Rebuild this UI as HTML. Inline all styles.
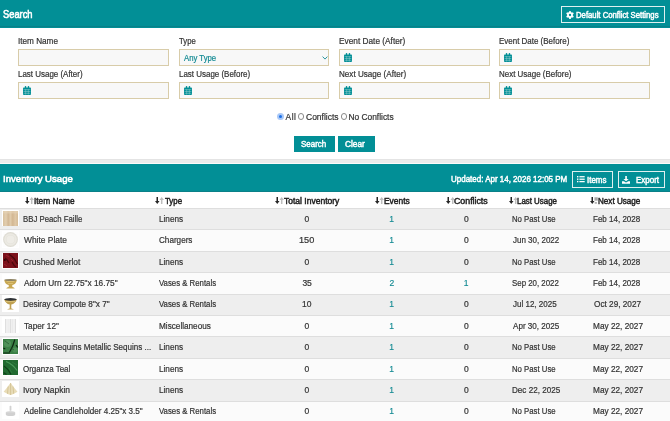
<!DOCTYPE html><html><head><meta charset="utf-8"><style>
*{box-sizing:border-box}
html,body{margin:0;padding:0;width:670px;height:421px;overflow:hidden;background:#fff;font-family:"Liberation Sans",sans-serif}
#w{position:absolute;left:0;top:0;width:670px;height:421px;overflow:hidden;will-change:transform;background:#fff}
.a{position:absolute}
.t{position:absolute;white-space:nowrap;transform-origin:0 0}
.r{-webkit-text-stroke:0.2px currentColor}
.sb{-webkit-text-stroke:0.45px currentColor}
.lk{-webkit-text-stroke:0.15px currentColor}
.sb2{-webkit-text-stroke:0.6px currentColor}
.inp{position:absolute;height:17px;border:1px solid #d8cca9;background:#f8f8f8}
.cal{position:absolute;left:3.8px;top:2.8px}
.ob{position:absolute;border:1px solid #dff0f0}
.tb{position:absolute;background:#028f96}
.th{position:absolute;left:2.4px;width:16.4px;height:16.4px;overflow:hidden;background:#fff;padding:0.7px}
.th svg{display:block;width:15px;height:15px}
</style></head><body><div id="w">
<div class="a" style="left:0;top:0;width:670px;height:27.5px;background:#028f96"></div>
<div class="a" style="left:0;top:26.4px;width:670px;height:1.1px;background:#0a8088"></div>
<div class="ob" style="left:561px;top:6.2px;width:104px;height:16.6px"></div>
<svg class="a" style="left:565.5px;top:11px" width="8" height="8" viewBox="-4 -4 8 8"><g fill="#fff"><rect x="-0.95" y="-3.9" width="1.9" height="2.2" rx="0.4" transform="rotate(0)"/><rect x="-0.95" y="-3.9" width="1.9" height="2.2" rx="0.4" transform="rotate(60)"/><rect x="-0.95" y="-3.9" width="1.9" height="2.2" rx="0.4" transform="rotate(120)"/><rect x="-0.95" y="-3.9" width="1.9" height="2.2" rx="0.4" transform="rotate(180)"/><rect x="-0.95" y="-3.9" width="1.9" height="2.2" rx="0.4" transform="rotate(240)"/><rect x="-0.95" y="-3.9" width="1.9" height="2.2" rx="0.4" transform="rotate(300)"/><circle r="2.9"/></g><circle r="1.15" fill="#028f96"/></svg>
<div class="inp" style="left:18.0px;top:49px;width:150.6px"></div>
<div class="inp" style="left:18.0px;top:82px;width:150.6px"><svg class="cal" width="8" height="9" viewBox="0 0 8 9"><rect x="0" y="1.4" width="8" height="7.6" rx="0.9" fill="#028f96"/><rect x="1.9" y="0" width="1.3" height="2.4" rx="0.5" fill="#028f96"/><rect x="4.8" y="0" width="1.3" height="2.4" rx="0.5" fill="#028f96"/><path d="M0.6 3.6h6.8M0.6 5.5h6.8M0.6 7.3h6.8M2.7 3.3v5.3M5.3 3.3v5.3" stroke="#cfe6e7" stroke-width="0.45" opacity="0.8"/></svg></div>
<div class="inp" style="left:178.8px;top:49px;width:150.6px"><svg class="a" style="left:142px;top:5.8px" width="6" height="4" viewBox="0 0 6 4"><path d="M0.6 0.6L3 3.1L5.4 0.6" fill="none" stroke="#138a93" stroke-width="0.9"/></svg></div>
<div class="inp" style="left:178.8px;top:82px;width:150.6px"><svg class="cal" width="8" height="9" viewBox="0 0 8 9"><rect x="0" y="1.4" width="8" height="7.6" rx="0.9" fill="#028f96"/><rect x="1.9" y="0" width="1.3" height="2.4" rx="0.5" fill="#028f96"/><rect x="4.8" y="0" width="1.3" height="2.4" rx="0.5" fill="#028f96"/><path d="M0.6 3.6h6.8M0.6 5.5h6.8M0.6 7.3h6.8M2.7 3.3v5.3M5.3 3.3v5.3" stroke="#cfe6e7" stroke-width="0.45" opacity="0.8"/></svg></div>
<div class="inp" style="left:339.2px;top:49px;width:150.6px"><svg class="cal" width="8" height="9" viewBox="0 0 8 9"><rect x="0" y="1.4" width="8" height="7.6" rx="0.9" fill="#028f96"/><rect x="1.9" y="0" width="1.3" height="2.4" rx="0.5" fill="#028f96"/><rect x="4.8" y="0" width="1.3" height="2.4" rx="0.5" fill="#028f96"/><path d="M0.6 3.6h6.8M0.6 5.5h6.8M0.6 7.3h6.8M2.7 3.3v5.3M5.3 3.3v5.3" stroke="#cfe6e7" stroke-width="0.45" opacity="0.8"/></svg></div>
<div class="inp" style="left:339.2px;top:82px;width:150.6px"><svg class="cal" width="8" height="9" viewBox="0 0 8 9"><rect x="0" y="1.4" width="8" height="7.6" rx="0.9" fill="#028f96"/><rect x="1.9" y="0" width="1.3" height="2.4" rx="0.5" fill="#028f96"/><rect x="4.8" y="0" width="1.3" height="2.4" rx="0.5" fill="#028f96"/><path d="M0.6 3.6h6.8M0.6 5.5h6.8M0.6 7.3h6.8M2.7 3.3v5.3M5.3 3.3v5.3" stroke="#cfe6e7" stroke-width="0.45" opacity="0.8"/></svg></div>
<div class="inp" style="left:499.3px;top:49px;width:150.6px"><svg class="cal" width="8" height="9" viewBox="0 0 8 9"><rect x="0" y="1.4" width="8" height="7.6" rx="0.9" fill="#028f96"/><rect x="1.9" y="0" width="1.3" height="2.4" rx="0.5" fill="#028f96"/><rect x="4.8" y="0" width="1.3" height="2.4" rx="0.5" fill="#028f96"/><path d="M0.6 3.6h6.8M0.6 5.5h6.8M0.6 7.3h6.8M2.7 3.3v5.3M5.3 3.3v5.3" stroke="#cfe6e7" stroke-width="0.45" opacity="0.8"/></svg></div>
<div class="inp" style="left:499.3px;top:82px;width:150.6px"><svg class="cal" width="8" height="9" viewBox="0 0 8 9"><rect x="0" y="1.4" width="8" height="7.6" rx="0.9" fill="#028f96"/><rect x="1.9" y="0" width="1.3" height="2.4" rx="0.5" fill="#028f96"/><rect x="4.8" y="0" width="1.3" height="2.4" rx="0.5" fill="#028f96"/><path d="M0.6 3.6h6.8M0.6 5.5h6.8M0.6 7.3h6.8M2.7 3.3v5.3M5.3 3.3v5.3" stroke="#cfe6e7" stroke-width="0.45" opacity="0.8"/></svg></div>
<div class="a" style="left:277px;top:112.9px;width:7px;height:7px;border-radius:50%;background:#a9c8f7"></div>
<div class="a" style="left:278.8px;top:114.7px;width:3.4px;height:3.4px;border-radius:50%;background:#1b6fe6"></div>
<div class="a" style="left:297.79999999999995px;top:113.4px;width:6.2px;height:6.2px;border-radius:50%;border:0.7px solid #8a8a8a;background:#fff"></div>
<div class="a" style="left:340.79999999999995px;top:113.4px;width:6.2px;height:6.2px;border-radius:50%;border:0.7px solid #8a8a8a;background:#fff"></div>
<div class="tb" style="left:293.8px;top:135.8px;width:41.2px;height:16.1px"></div>
<div class="tb" style="left:338.1px;top:135.8px;width:36.5px;height:16.1px"></div>
<div class="a" style="left:0;top:158.8px;width:670px;height:5.6px;background:#ebebeb"></div>
<div class="a" style="left:0;top:158.8px;width:670px;height:1px;background:#e4e4e4"></div>
<div class="a" style="left:0;top:163.4px;width:670px;height:0.9px;background:#fafafa"></div>
<div class="a" style="left:0;top:164.3px;width:670px;height:28.2px;background:#028f96"></div>
<div class="a" style="left:0;top:191.4px;width:670px;height:1.1px;background:#0a8088"></div>
<div class="ob" style="left:572px;top:171.2px;width:40.5px;height:16.4px"></div>
<div class="ob" style="left:618px;top:171.2px;width:47px;height:16.4px"></div>
<svg class="a" style="left:576.6px;top:176.3px" width="8" height="7" viewBox="0 0 8 7"><g fill="#fff"><rect x="0" y="0" width="1.4" height="1.4"/><rect x="0" y="2.5" width="1.4" height="1.4"/><rect x="0" y="4.9" width="1.4" height="1.4"/><rect x="2.4" y="0.1" width="5.3" height="1.25"/><rect x="2.4" y="2.6" width="5.3" height="1.25"/><rect x="2.4" y="5.0" width="5.3" height="1.25"/></g></svg>
<svg class="a" style="left:621.9px;top:175.6px" width="8" height="8" viewBox="0 0 8 8"><g fill="#fff"><rect x="3.25" y="0" width="1.6" height="3.4"/><path d="M1.4 3h5.3L4.05 5.3z"/><path d="M0 5.2h2.2l0.9 1h1.9l0.9-1H8v2.6H0z"/></g></svg>
<div class="a" style="left:0;top:192.5px;width:670px;height:15.5px;background:#fff"></div>
<svg class="a" style="left:24.9px;top:197.1px" width="9" height="7" viewBox="0 0 9 7"><rect x="1.5" y="0" width="1.5" height="5" fill="#262626"/><path d="M0 4.0h4.5L2.25 7z" fill="#262626"/><rect x="5.95" y="2" width="1.5" height="5" fill="#bdbdbd"/><path d="M4.45 3.0h4.5L6.7 0z" fill="#bdbdbd"/></svg>
<svg class="a" style="left:155.2px;top:197.1px" width="9" height="7" viewBox="0 0 9 7"><rect x="1.5" y="0" width="1.5" height="5" fill="#262626"/><path d="M0 4.0h4.5L2.25 7z" fill="#262626"/><rect x="5.95" y="2" width="1.5" height="5" fill="#bdbdbd"/><path d="M4.45 3.0h4.5L6.7 0z" fill="#bdbdbd"/></svg>
<svg class="a" style="left:274.7px;top:197.1px" width="9" height="7" viewBox="0 0 9 7"><rect x="1.5" y="0" width="1.5" height="5" fill="#262626"/><path d="M0 4.0h4.5L2.25 7z" fill="#262626"/><rect x="5.95" y="2" width="1.5" height="5" fill="#bdbdbd"/><path d="M4.45 3.0h4.5L6.7 0z" fill="#bdbdbd"/></svg>
<svg class="a" style="left:375.3px;top:197.1px" width="9" height="7" viewBox="0 0 9 7"><rect x="1.5" y="0" width="1.5" height="5" fill="#262626"/><path d="M0 4.0h4.5L2.25 7z" fill="#262626"/><rect x="5.95" y="2" width="1.5" height="5" fill="#bdbdbd"/><path d="M4.45 3.0h4.5L6.7 0z" fill="#bdbdbd"/></svg>
<svg class="a" style="left:445.8px;top:197.1px" width="9" height="7" viewBox="0 0 9 7"><rect x="1.5" y="0" width="1.5" height="5" fill="#262626"/><path d="M0 4.0h4.5L2.25 7z" fill="#262626"/><rect x="5.95" y="2" width="1.5" height="5" fill="#bdbdbd"/><path d="M4.45 3.0h4.5L6.7 0z" fill="#bdbdbd"/></svg>
<svg class="a" style="left:508.6px;top:197.1px" width="9" height="7" viewBox="0 0 9 7"><rect x="1.5" y="0" width="1.5" height="5" fill="#262626"/><path d="M0 4.0h4.5L2.25 7z" fill="#262626"/><rect x="5.95" y="2" width="1.5" height="5" fill="#bdbdbd"/><path d="M4.45 3.0h4.5L6.7 0z" fill="#bdbdbd"/></svg>
<svg class="a" style="left:589.9px;top:197.1px" width="9" height="7" viewBox="0 0 9 7"><rect x="1.5" y="0" width="1.5" height="5" fill="#262626"/><path d="M0 4.0h4.5L2.25 7z" fill="#262626"/><rect x="4.4" y="0.3" width="3.4" height="3.4" fill="#aaaaaa"/><rect x="4.7" y="5" width="2.2" height="1.8" fill="#b3b3b3"/></svg>
<div class="a" style="left:0;top:208.00px;width:670px;height:21.89px;background:#eeeeee"></div>
<div class="a" style="left:0;top:208.00px;width:670px;height:1px;background:#dedede"></div>
<div class="th" style="top:209.90px"><svg width="15" height="15" viewBox="0 0 15 15"><defs><linearGradient id="pg" x1="0" x2="1" y1="0" y2="0"><stop offset="0" stop-color="#d8c09c"/><stop offset=".2" stop-color="#e2ceb0"/><stop offset=".35" stop-color="#d2b794"/><stop offset=".5" stop-color="#e0cbab"/><stop offset=".65" stop-color="#d3b792"/><stop offset=".82" stop-color="#dfc8a7"/><stop offset="1" stop-color="#d5bb96"/></linearGradient></defs><rect width="15" height="15" fill="url(#pg)"/><rect width="15" height="2.5" fill="#e6d4b8" opacity=".6"/></svg></div>
<div class="a" style="left:0;top:229.39px;width:670px;height:21.89px;background:#fbfbfb"></div>
<div class="a" style="left:0;top:229.39px;width:670px;height:1px;background:#dedede"></div>
<div class="th" style="top:231.29px"><svg width="15" height="15" viewBox="0 0 15 15"><rect width="15" height="15" fill="#fdfdfd"/><circle cx="7.5" cy="7.5" r="7.4" fill="#dedcd3"/><circle cx="7.5" cy="7.5" r="6.3" fill="#ebe9e2"/><circle cx="7.5" cy="7.5" r="4.6" fill="#e4e2da"/><circle cx="7.5" cy="7.5" r="4.0" fill="#eeece6"/></svg></div>
<div class="a" style="left:0;top:250.78px;width:670px;height:21.89px;background:#eeeeee"></div>
<div class="a" style="left:0;top:250.78px;width:670px;height:1px;background:#dedede"></div>
<div class="th" style="top:252.68px"><svg width="15" height="15" viewBox="0 0 15 15"><rect width="15" height="15" fill="#7c121b"/><path d="M6 1C8 3 10 4 11.5 6S13 10 15 11M2 5C4 6 5 8 6 10M9 9c1 2 2 4 4 5" stroke="#420609" stroke-width="1.3" fill="none" opacity=".85"/><path d="M3 2l3 2M8 6l2 2M1 11l3 2" stroke="#a52a35" stroke-width=".7"/><circle cx="1.8" cy="7" r="1" fill="#2a0306"/></svg></div>
<div class="a" style="left:0;top:272.17px;width:670px;height:21.89px;background:#fbfbfb"></div>
<div class="a" style="left:0;top:272.17px;width:670px;height:1px;background:#dedede"></div>
<div class="th" style="top:274.07px"><svg width="15" height="15" viewBox="0 0 15 15"><rect width="15" height="15" fill="#fff"/><path d="M1.3 5h12.4c-.3 2.8-2 4.6-4.4 5.1v1.8c1.5.3 2.5.9 2.5 1.7H3.2c0-.8 1-1.4 2.5-1.7v-1.8C3.3 9.6 1.6 7.8 1.3 5z" fill="#c8a751"/><ellipse cx="7.5" cy="5" rx="6.2" ry="0.9" fill="#8f8464"/><path d="M3.5 6.5h8M5 8.5h5" stroke="#e6d08c" stroke-width=".6"/></svg></div>
<div class="a" style="left:0;top:293.56px;width:670px;height:21.89px;background:#eeeeee"></div>
<div class="a" style="left:0;top:293.56px;width:670px;height:1px;background:#dedede"></div>
<div class="th" style="top:295.46px"><svg width="15" height="15" viewBox="0 0 15 15"><rect width="15" height="15" fill="#fff"/><path d="M1.2 3.2h12.6c-.6 3-3 4.8-5.5 5.2v4c1.3.2 2.4.6 2.4 1.2H4.3c0-.6 1.1-1 2.4-1.2v-4C4.2 8 1.8 6.2 1.2 3.2z" fill="#c0a050"/><ellipse cx="7.5" cy="3.4" rx="6.2" ry="1.3" fill="#2e3236"/><path d="M2.8 5.5h9.4" stroke="#e8d590" stroke-width=".6"/></svg></div>
<div class="a" style="left:0;top:314.95px;width:670px;height:21.89px;background:#fbfbfb"></div>
<div class="a" style="left:0;top:314.95px;width:670px;height:1px;background:#dedede"></div>
<div class="th" style="top:316.85px"><svg width="15" height="15" viewBox="0 0 15 15"><rect width="15" height="15" fill="#fff"/><g fill="#dadada"><rect x="2" y="1" width="0.9" height="14"/><rect x="4.6" y="1" width="0.9" height="14"/><rect x="7" y="1" width="0.9" height="14"/><rect x="9.4" y="1" width="0.9" height="14"/><rect x="12" y="1" width="0.9" height="14"/></g><g fill="#f0f0f0"><rect x="2.9" y="1" width="1.7" height="14"/><rect x="5.5" y="1" width="1.5" height="14"/><rect x="7.9" y="1" width="1.5" height="14"/><rect x="10.3" y="1" width="1.7" height="14"/></g></svg></div>
<div class="a" style="left:0;top:336.34px;width:670px;height:21.89px;background:#eeeeee"></div>
<div class="a" style="left:0;top:336.34px;width:670px;height:1px;background:#dedede"></div>
<div class="th" style="top:338.24px"><svg width="15" height="15" viewBox="0 0 15 15"><rect width="15" height="15" fill="#3b8046"/><circle cx="4.5" cy="4.5" r="3.5" fill="#5e9d66" opacity=".6"/><circle cx="12" cy="11" r="2.5" fill="#5e9d66" opacity=".5"/><path d="M11.8 0.5C11 4 10 7.5 6.5 13.2M0.3 14h6.5M13 6l1.8 2.5M0.3 9l2 1" stroke="#0d2611" stroke-width="1.2" fill="none"/><path d="M2 2l4 3M8 9l3 2" stroke="#1d4a24" stroke-width=".6"/></svg></div>
<div class="a" style="left:0;top:357.73px;width:670px;height:21.89px;background:#fbfbfb"></div>
<div class="a" style="left:0;top:357.73px;width:670px;height:1px;background:#dedede"></div>
<div class="th" style="top:359.63px"><svg width="15" height="15" viewBox="0 0 15 15"><rect width="15" height="15" fill="#216a30"/><path d="M3 1.5C7 3 11 6 14 10.5" stroke="#4a9a5a" stroke-width="1.3" fill="none"/><path d="M1 6C4 8 6 10 8 14.5M0.5 12.5l3 2" stroke="#0f4019" stroke-width="1.2" fill="none"/><path d="M9 2l5 3M6 8l3 5" stroke="#2f7d3f" stroke-width=".8"/></svg></div>
<div class="a" style="left:0;top:379.12px;width:670px;height:21.89px;background:#eeeeee"></div>
<div class="a" style="left:0;top:379.12px;width:670px;height:1px;background:#dedede"></div>
<div class="th" style="top:381.02px"><svg width="15" height="15" viewBox="0 0 15 15"><rect width="15" height="15" fill="#fff"/><path d="M7.6 0.8C9.5 3.5 12.5 7.5 14.5 9.8 12 11.3 9.6 12.6 7.6 13 5.6 12.6 3 11.3 0.6 9.8 2.6 7.5 5.6 3.5 7.6 0.8z" fill="#e8dcb8"/><path d="M7.6 1v12M5.2 4.5L4.5 11.8M10 4.5L10.7 11.8" stroke="#cdbb88" stroke-width=".7"/></svg></div>
<div class="a" style="left:0;top:400.51px;width:670px;height:21.89px;background:#fbfbfb"></div>
<div class="a" style="left:0;top:400.51px;width:670px;height:1px;background:#dedede"></div>
<div class="th" style="top:402.41px"><svg width="15" height="15" viewBox="0 0 15 15"><rect width="15" height="15" fill="#fff"/><rect x="6.6" y="2.8" width="1.8" height="5" rx=".6" fill="#d2d2d2"/><ellipse cx="7.5" cy="9.6" rx="4.7" ry="1.6" fill="#dcdcdc"/><path d="M2.8 9.6v1.8c0 .9 2.1 1.6 4.7 1.6s4.7-.7 4.7-1.6V9.6" fill="#d0d0d0"/></svg></div>
<div class="t sb2" style="left:2.56px;top:9px;font-size:10.5px;line-height:10.5px;font-weight:400;letter-spacing:0px;color:#fff;transform:scaleX(0.8875)">Search</div>
<div class="t sb" style="left:576.41px;top:11px;font-size:8.4px;line-height:8.4px;font-weight:400;letter-spacing:0px;color:#fff;transform:scaleX(0.9235)">Default Conflict Settings</div>
<div class="t r" style="left:18.17px;top:37px;font-size:8.4px;line-height:8.4px;font-weight:400;letter-spacing:0px;color:#333333;transform:scaleX(0.9761)">Item Name</div>
<div class="t r" style="left:179.37px;top:37px;font-size:8.4px;line-height:8.4px;font-weight:400;letter-spacing:0px;color:#333333;transform:scaleX(0.9200)">Type</div>
<div class="t r" style="left:339.06px;top:37px;font-size:8.4px;line-height:8.4px;font-weight:400;letter-spacing:0px;color:#333333;transform:scaleX(0.9901)">Event Date (After)</div>
<div class="t r" style="left:499.49px;top:37px;font-size:8.4px;line-height:8.4px;font-weight:400;letter-spacing:0px;color:#333333;transform:scaleX(0.9500)">Event Date (Before)</div>
<div class="t r" style="left:18.19px;top:70px;font-size:8.4px;line-height:8.4px;font-weight:400;letter-spacing:0px;color:#333333;transform:scaleX(0.9500)">Last Usage (After)</div>
<div class="t r" style="left:178.89px;top:70px;font-size:8.4px;line-height:8.4px;font-weight:400;letter-spacing:0px;color:#333333;transform:scaleX(0.9500)">Last Usage (Before)</div>
<div class="t r" style="left:339.07px;top:70px;font-size:8.4px;line-height:8.4px;font-weight:400;letter-spacing:0px;color:#333333;transform:scaleX(0.9676)">Next Usage (After)</div>
<div class="t r" style="left:499.49px;top:70px;font-size:8.4px;line-height:8.4px;font-weight:400;letter-spacing:0px;color:#333333;transform:scaleX(0.9500)">Next Usage (Before)</div>
<div class="t r" style="left:184.10px;top:54px;font-size:8.4px;line-height:8.4px;font-weight:400;letter-spacing:0px;color:#138a93;transform:scaleX(0.9246)">Any Type</div>
<div class="t r" style="left:285.60px;top:113px;font-size:8.4px;line-height:8.4px;font-weight:400;letter-spacing:0.45px;color:#333333;transform:scaleX(1.0000)">All</div>
<div class="t r" style="left:305.69px;top:113px;font-size:8.4px;line-height:8.4px;font-weight:400;letter-spacing:0px;color:#333333;transform:scaleX(1.0144)">Conflicts</div>
<div class="t r" style="left:348.45px;top:113px;font-size:8.4px;line-height:8.4px;font-weight:400;letter-spacing:0px;color:#333333;transform:scaleX(1.0000)">No Conflicts</div>
<div class="t sb" style="left:301.33px;top:140px;font-size:8.4px;line-height:8.4px;font-weight:400;letter-spacing:0px;color:#fff;transform:scaleX(0.9490)">Search</div>
<div class="t sb" style="left:345.21px;top:140px;font-size:8.4px;line-height:8.4px;font-weight:400;letter-spacing:0px;color:#fff;transform:scaleX(0.9897)">Clear</div>
<div class="t sb2" style="left:2.62px;top:174px;font-size:9.8px;line-height:9.8px;font-weight:400;letter-spacing:0px;color:#fff;transform:scaleX(0.9792)">Inventory Usage</div>
<div class="t sb" style="left:451.49px;top:175px;font-size:8.4px;line-height:8.4px;font-weight:400;letter-spacing:0px;color:#fff;transform:scaleX(0.9527)">Updated: Apr 14, 2026 12:05 PM</div>
<div class="t sb" style="left:587.29px;top:176px;font-size:8.4px;line-height:8.4px;font-weight:400;letter-spacing:0px;color:#fff;transform:scaleX(0.9487)">Items</div>
<div class="t sb" style="left:635.89px;top:176px;font-size:8.4px;line-height:8.4px;font-weight:400;letter-spacing:0px;color:#fff;transform:scaleX(0.9532)">Export</div>
<div class="t sb" style="left:33.86px;top:197px;font-size:8.4px;line-height:8.4px;font-weight:400;letter-spacing:0px;color:#222;transform:scaleX(0.9912)">Item Name</div>
<div class="t sb" style="left:165.17px;top:197px;font-size:8.4px;line-height:8.4px;font-weight:400;letter-spacing:0px;color:#222;transform:scaleX(0.9371)">Type</div>
<div class="t sb" style="left:284.35px;top:197px;font-size:8.4px;line-height:8.4px;font-weight:400;letter-spacing:0px;color:#222;transform:scaleX(1.0167)">Total Inventory</div>
<div class="t sb" style="left:383.85px;top:197px;font-size:8.4px;line-height:8.4px;font-weight:400;letter-spacing:0px;color:#222;transform:scaleX(1.0041)">Events</div>
<div class="t sb" style="left:454.48px;top:197px;font-size:8.4px;line-height:8.4px;font-weight:400;letter-spacing:0px;color:#222;transform:scaleX(1.0496)">Conflicts</div>
<div class="t sb" style="left:516.89px;top:197px;font-size:8.4px;line-height:8.4px;font-weight:400;letter-spacing:0px;color:#222;transform:scaleX(0.9430)">Last Usage</div>
<div class="t sb" style="left:598.38px;top:197px;font-size:8.4px;line-height:8.4px;font-weight:400;letter-spacing:0px;color:#222;transform:scaleX(0.9661)">Next Usage</div>
<div class="t r" style="left:23.21px;top:215px;font-size:8.5px;line-height:8.5px;font-weight:400;letter-spacing:0px;color:#333333;transform:scaleX(0.9165)">BBJ Peach Faille</div>
<div class="t r" style="left:158.98px;top:215px;font-size:8.5px;line-height:8.5px;font-weight:400;letter-spacing:0px;color:#333333;transform:scaleX(0.9625)">Linens</div>
<div class="t r" style="left:304.62px;top:215px;font-size:8.5px;line-height:8.5px;font-weight:400;letter-spacing:0px;color:#333333;transform:scaleX(1.0000)">0</div>
<div class="t lk" style="left:389.30px;top:215px;font-size:8.5px;line-height:8.5px;font-weight:400;letter-spacing:0px;color:#138a93;transform:scaleX(1.0000)">1</div>
<div class="t r" style="left:463.93px;top:215px;font-size:8.5px;line-height:8.5px;font-weight:400;letter-spacing:0px;color:#333333;transform:scaleX(1.0000)">0</div>
<div class="t r" style="left:512.11px;top:215px;font-size:8.5px;line-height:8.5px;font-weight:400;letter-spacing:0px;color:#333333;transform:scaleX(0.9140)">No Past Use</div>
<div class="t r" style="left:593.49px;top:215px;font-size:8.5px;line-height:8.5px;font-weight:400;letter-spacing:0px;color:#333333;transform:scaleX(0.9429)">Feb 14, 2028</div>
<div class="t r" style="left:23.90px;top:236px;font-size:8.5px;line-height:8.5px;font-weight:400;letter-spacing:0px;color:#333333;transform:scaleX(0.9884)">White Plate</div>
<div class="t r" style="left:159.22px;top:236px;font-size:8.5px;line-height:8.5px;font-weight:400;letter-spacing:0px;color:#333333;transform:scaleX(0.9559)">Chargers</div>
<div class="t r" style="left:299.39px;top:236px;font-size:8.5px;line-height:8.5px;font-weight:400;letter-spacing:0px;color:#333333;transform:scaleX(1.0769)">150</div>
<div class="t lk" style="left:389.30px;top:236px;font-size:8.5px;line-height:8.5px;font-weight:400;letter-spacing:0px;color:#138a93;transform:scaleX(1.0000)">1</div>
<div class="t r" style="left:463.93px;top:236px;font-size:8.5px;line-height:8.5px;font-weight:400;letter-spacing:0px;color:#333333;transform:scaleX(1.0000)">0</div>
<div class="t r" style="left:512.56px;top:236px;font-size:8.5px;line-height:8.5px;font-weight:400;letter-spacing:0px;color:#333333;transform:scaleX(0.9402)">Jun 30, 2022</div>
<div class="t r" style="left:593.49px;top:236px;font-size:8.5px;line-height:8.5px;font-weight:400;letter-spacing:0px;color:#333333;transform:scaleX(0.9429)">Feb 14, 2028</div>
<div class="t r" style="left:23.41px;top:258px;font-size:8.5px;line-height:8.5px;font-weight:400;letter-spacing:0px;color:#333333;transform:scaleX(0.9861)">Crushed Merlot</div>
<div class="t r" style="left:158.98px;top:258px;font-size:8.5px;line-height:8.5px;font-weight:400;letter-spacing:0px;color:#333333;transform:scaleX(0.9625)">Linens</div>
<div class="t r" style="left:304.62px;top:258px;font-size:8.5px;line-height:8.5px;font-weight:400;letter-spacing:0px;color:#333333;transform:scaleX(1.0000)">0</div>
<div class="t lk" style="left:389.30px;top:258px;font-size:8.5px;line-height:8.5px;font-weight:400;letter-spacing:0px;color:#138a93;transform:scaleX(1.0000)">1</div>
<div class="t r" style="left:463.93px;top:258px;font-size:8.5px;line-height:8.5px;font-weight:400;letter-spacing:0px;color:#333333;transform:scaleX(1.0000)">0</div>
<div class="t r" style="left:512.11px;top:258px;font-size:8.5px;line-height:8.5px;font-weight:400;letter-spacing:0px;color:#333333;transform:scaleX(0.9140)">No Past Use</div>
<div class="t r" style="left:593.49px;top:258px;font-size:8.5px;line-height:8.5px;font-weight:400;letter-spacing:0px;color:#333333;transform:scaleX(0.9429)">Feb 14, 2028</div>
<div class="t r" style="left:23.90px;top:279px;font-size:8.5px;line-height:8.5px;font-weight:400;letter-spacing:0px;color:#333333;transform:scaleX(0.9719)">Adorn Urn 22.75"x 16.75"</div>
<div class="t r" style="left:159.47px;top:279px;font-size:8.5px;line-height:8.5px;font-weight:400;letter-spacing:0px;color:#333333;transform:scaleX(0.9171)">Vases &amp; Rentals</div>
<div class="t r" style="left:302.38px;top:279px;font-size:8.5px;line-height:8.5px;font-weight:400;letter-spacing:0px;color:#333333;transform:scaleX(1.0000)">35</div>
<div class="t lk" style="left:389.43px;top:279px;font-size:8.5px;line-height:8.5px;font-weight:400;letter-spacing:0px;color:#138a93;transform:scaleX(1.0000)">2</div>
<div class="t lk" style="left:463.80px;top:279px;font-size:8.5px;line-height:8.5px;font-weight:400;letter-spacing:0px;color:#138a93;transform:scaleX(1.0000)">1</div>
<div class="t r" style="left:512.34px;top:279px;font-size:8.5px;line-height:8.5px;font-weight:400;letter-spacing:0px;color:#333333;transform:scaleX(0.9266)">Sep 20, 2022</div>
<div class="t r" style="left:593.49px;top:279px;font-size:8.5px;line-height:8.5px;font-weight:400;letter-spacing:0px;color:#333333;transform:scaleX(0.9429)">Feb 14, 2028</div>
<div class="t r" style="left:23.18px;top:300px;font-size:8.5px;line-height:8.5px;font-weight:400;letter-spacing:0px;color:#333333;transform:scaleX(0.9607)">Desiray Compote 8"x 7"</div>
<div class="t r" style="left:159.47px;top:300px;font-size:8.5px;line-height:8.5px;font-weight:400;letter-spacing:0px;color:#333333;transform:scaleX(0.9171)">Vases &amp; Rentals</div>
<div class="t r" style="left:302.00px;top:300px;font-size:8.5px;line-height:8.5px;font-weight:400;letter-spacing:0px;color:#333333;transform:scaleX(1.0000)">10</div>
<div class="t lk" style="left:389.30px;top:300px;font-size:8.5px;line-height:8.5px;font-weight:400;letter-spacing:0px;color:#138a93;transform:scaleX(1.0000)">1</div>
<div class="t r" style="left:463.93px;top:300px;font-size:8.5px;line-height:8.5px;font-weight:400;letter-spacing:0px;color:#333333;transform:scaleX(1.0000)">0</div>
<div class="t r" style="left:512.56px;top:300px;font-size:8.5px;line-height:8.5px;font-weight:400;letter-spacing:0px;color:#333333;transform:scaleX(0.9421)">Jul 12, 2025</div>
<div class="t r" style="left:593.72px;top:300px;font-size:8.5px;line-height:8.5px;font-weight:400;letter-spacing:0px;color:#333333;transform:scaleX(0.9675)">Oct 29, 2027</div>
<div class="t r" style="left:23.66px;top:322px;font-size:8.5px;line-height:8.5px;font-weight:400;letter-spacing:0px;color:#333333;transform:scaleX(0.9662)">Taper 12"</div>
<div class="t r" style="left:158.98px;top:322px;font-size:8.5px;line-height:8.5px;font-weight:400;letter-spacing:0px;color:#333333;transform:scaleX(0.9630)">Miscellaneous</div>
<div class="t r" style="left:304.62px;top:322px;font-size:8.5px;line-height:8.5px;font-weight:400;letter-spacing:0px;color:#333333;transform:scaleX(1.0000)">0</div>
<div class="t lk" style="left:389.30px;top:322px;font-size:8.5px;line-height:8.5px;font-weight:400;letter-spacing:0px;color:#138a93;transform:scaleX(1.0000)">1</div>
<div class="t r" style="left:463.93px;top:322px;font-size:8.5px;line-height:8.5px;font-weight:400;letter-spacing:0px;color:#333333;transform:scaleX(1.0000)">0</div>
<div class="t r" style="left:512.80px;top:322px;font-size:8.5px;line-height:8.5px;font-weight:400;letter-spacing:0px;color:#333333;transform:scaleX(0.9513)">Apr 30, 2025</div>
<div class="t r" style="left:593.47px;top:322px;font-size:8.5px;line-height:8.5px;font-weight:400;letter-spacing:0px;color:#333333;transform:scaleX(0.9711)">May 22, 2027</div>
<div class="t r" style="left:23.19px;top:343px;font-size:8.5px;line-height:8.5px;font-weight:400;letter-spacing:0px;color:#333333;transform:scaleX(0.9455)">Metallic Sequins Metallic Sequins ...</div>
<div class="t r" style="left:158.98px;top:343px;font-size:8.5px;line-height:8.5px;font-weight:400;letter-spacing:0px;color:#333333;transform:scaleX(0.9625)">Linens</div>
<div class="t r" style="left:304.62px;top:343px;font-size:8.5px;line-height:8.5px;font-weight:400;letter-spacing:0px;color:#333333;transform:scaleX(1.0000)">0</div>
<div class="t lk" style="left:389.30px;top:343px;font-size:8.5px;line-height:8.5px;font-weight:400;letter-spacing:0px;color:#138a93;transform:scaleX(1.0000)">1</div>
<div class="t r" style="left:463.93px;top:343px;font-size:8.5px;line-height:8.5px;font-weight:400;letter-spacing:0px;color:#333333;transform:scaleX(1.0000)">0</div>
<div class="t r" style="left:512.11px;top:343px;font-size:8.5px;line-height:8.5px;font-weight:400;letter-spacing:0px;color:#333333;transform:scaleX(0.9140)">No Past Use</div>
<div class="t r" style="left:593.47px;top:343px;font-size:8.5px;line-height:8.5px;font-weight:400;letter-spacing:0px;color:#333333;transform:scaleX(0.9711)">May 22, 2027</div>
<div class="t r" style="left:23.43px;top:365px;font-size:8.5px;line-height:8.5px;font-weight:400;letter-spacing:0px;color:#333333;transform:scaleX(0.9381)">Organza Teal</div>
<div class="t r" style="left:158.98px;top:365px;font-size:8.5px;line-height:8.5px;font-weight:400;letter-spacing:0px;color:#333333;transform:scaleX(0.9625)">Linens</div>
<div class="t r" style="left:304.62px;top:365px;font-size:8.5px;line-height:8.5px;font-weight:400;letter-spacing:0px;color:#333333;transform:scaleX(1.0000)">0</div>
<div class="t lk" style="left:389.30px;top:365px;font-size:8.5px;line-height:8.5px;font-weight:400;letter-spacing:0px;color:#138a93;transform:scaleX(1.0000)">1</div>
<div class="t r" style="left:463.93px;top:365px;font-size:8.5px;line-height:8.5px;font-weight:400;letter-spacing:0px;color:#333333;transform:scaleX(1.0000)">0</div>
<div class="t r" style="left:512.11px;top:365px;font-size:8.5px;line-height:8.5px;font-weight:400;letter-spacing:0px;color:#333333;transform:scaleX(0.9140)">No Past Use</div>
<div class="t r" style="left:593.47px;top:365px;font-size:8.5px;line-height:8.5px;font-weight:400;letter-spacing:0px;color:#333333;transform:scaleX(0.9711)">May 22, 2027</div>
<div class="t r" style="left:23.15px;top:386px;font-size:8.5px;line-height:8.5px;font-weight:400;letter-spacing:0px;color:#333333;transform:scaleX(0.9957)">Ivory Napkin</div>
<div class="t r" style="left:158.98px;top:386px;font-size:8.5px;line-height:8.5px;font-weight:400;letter-spacing:0px;color:#333333;transform:scaleX(0.9625)">Linens</div>
<div class="t r" style="left:304.62px;top:386px;font-size:8.5px;line-height:8.5px;font-weight:400;letter-spacing:0px;color:#333333;transform:scaleX(1.0000)">0</div>
<div class="t lk" style="left:389.30px;top:386px;font-size:8.5px;line-height:8.5px;font-weight:400;letter-spacing:0px;color:#138a93;transform:scaleX(1.0000)">1</div>
<div class="t r" style="left:463.93px;top:386px;font-size:8.5px;line-height:8.5px;font-weight:400;letter-spacing:0px;color:#333333;transform:scaleX(1.0000)">0</div>
<div class="t r" style="left:512.08px;top:386px;font-size:8.5px;line-height:8.5px;font-weight:400;letter-spacing:0px;color:#333333;transform:scaleX(0.9535)">Dec 22, 2025</div>
<div class="t r" style="left:593.47px;top:386px;font-size:8.5px;line-height:8.5px;font-weight:400;letter-spacing:0px;color:#333333;transform:scaleX(0.9711)">May 22, 2027</div>
<div class="t r" style="left:23.90px;top:407px;font-size:8.5px;line-height:8.5px;font-weight:400;letter-spacing:0px;color:#333333;transform:scaleX(0.9521)">Adeline Candleholder 4.25"x 3.5"</div>
<div class="t r" style="left:159.47px;top:407px;font-size:8.5px;line-height:8.5px;font-weight:400;letter-spacing:0px;color:#333333;transform:scaleX(0.9171)">Vases &amp; Rentals</div>
<div class="t r" style="left:304.62px;top:407px;font-size:8.5px;line-height:8.5px;font-weight:400;letter-spacing:0px;color:#333333;transform:scaleX(1.0000)">0</div>
<div class="t lk" style="left:389.30px;top:407px;font-size:8.5px;line-height:8.5px;font-weight:400;letter-spacing:0px;color:#138a93;transform:scaleX(1.0000)">1</div>
<div class="t r" style="left:463.93px;top:407px;font-size:8.5px;line-height:8.5px;font-weight:400;letter-spacing:0px;color:#333333;transform:scaleX(1.0000)">0</div>
<div class="t r" style="left:512.11px;top:407px;font-size:8.5px;line-height:8.5px;font-weight:400;letter-spacing:0px;color:#333333;transform:scaleX(0.9140)">No Past Use</div>
<div class="t r" style="left:593.47px;top:407px;font-size:8.5px;line-height:8.5px;font-weight:400;letter-spacing:0px;color:#333333;transform:scaleX(0.9711)">May 22, 2027</div>
</div></body></html>
